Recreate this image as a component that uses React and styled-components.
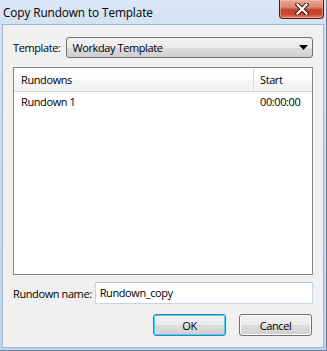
import React from "react";
import styled, { createGlobalStyle } from "styled-components";

const Global = createGlobalStyle`
  html, body { margin: 0; padding: 0; background: #fff; }
  body { font-family: "Open Sans", "Noto Sans", sans-serif; font-size: 11px; letter-spacing: -0.4px; color: #000; }
  * { box-sizing: border-box; }
`;

const Window = styled.div`
  width: 327px;
  height: 351px;
  display: flex;
  flex-direction: column;
  background: linear-gradient(#dce7f5 0px, #d3e1f2 24px, #bfd3ec 100%);
  border: 1px solid #6f819a;
  border-top: none;
  border-left: none;
  position: relative;
`;

const TitleBar = styled.div`
  height: 24px;
  flex: none;
  display: flex;
  align-items: flex-start;
  justify-content: space-between;
  padding-left: 3px;
`;

const Title = styled.div`
  font-size: 11.8px;
  letter-spacing: -0.1px;
  line-height: 18px;
  padding-top: 3px;
  color: #000;
`;

const CloseButton = styled.div`
  width: 45px;
  height: 19px;
  margin-right: 2px;
  border: 1px solid #4f1a12;
  border-top: none;
  border-radius: 0 0 4px 4px;
  background: linear-gradient(#e9a996 0%, #d98470 40%, #c5432a 55%, #c84a30 80%, #df8a6f 100%);
  box-shadow: inset 0 0 0 1px rgba(255, 200, 180, 0.45);
  display: flex;
  align-items: center;
  justify-content: center;
`;

const Client = styled.div`
  flex: 1;
  margin: 0 2px 2px 2px;
  background: #f0f0f0;
  border: 1px solid #a3b5cc;
  padding: 12px 10px 11px 10px;
  display: flex;
  flex-direction: column;
`;

const FieldRow = styled.div`
  display: flex;
  align-items: center;
  gap: ${(p) => p.$gap}px;
  height: ${(p) => p.$h}px;
  flex: none;
`;

const Label = styled.span`
  white-space: nowrap;
`;

const Combo = styled.div`
  flex: 1;
  height: 21px;
  border: 1px solid #707070;
  border-radius: 3px;
  background: linear-gradient(#f2f2f2 0%, #ebebeb 50%, #dddddd 51%, #cfcfcf 100%);
  display: flex;
  align-items: center;
  justify-content: space-between;
  padding: 0 4px 0 5px;
`;

const List = styled.div`
  margin-top: 9px;
  height: 208px;
  flex: none;
  border: 1px solid #828790;
  background: #fff;
  display: flex;
  flex-direction: column;
`;

const Grid = styled.div`
  display: grid;
  grid-template-columns: 240px 1fr;
`;

const HeaderCell = styled.div`
  height: 24px;
  display: flex;
  align-items: center;
  padding-left: ${(p) => p.$pl}px;
  background: linear-gradient(#ffffff 0%, #ffffff 45%, #f5f6f7 55%, #f1f2f4 100%);
  border-bottom: 1px solid #d5d5d5;
  border-right: ${(p) => (p.$divider ? "1px solid #dcdcdc" : "none")};
`;

const Cell = styled.div`
  height: 19px;
  display: flex;
  align-items: center;
  padding-left: ${(p) => p.$pl}px;
`;

const TextInput = styled.div`
  flex: 1;
  height: 22px;
  border: 1px solid #c5d5e6;
  border-top-color: #b4c3d4;
  background: #fff;
  display: flex;
  align-items: center;
  padding-left: 4px;
  padding-bottom: 2px;
`;

const ButtonRow = styled.div`
  margin-top: 10px;
  display: flex;
  justify-content: flex-end;
  gap: 13px;
  padding-right: 1px;
`;

const Button = styled.div`
  width: 73px;
  height: 22px;
  border: 1px solid ${(p) => (p.$default ? "#3c7fb1" : "#707070")};
  border-radius: 3px;
  background: linear-gradient(#f2f2f2 0%, #ebebeb 50%, #dddddd 51%, #cfcfcf 100%);
  box-shadow: ${(p) => (p.$default ? "inset 0 0 0 1px #48d2fb" : "inset 0 0 0 1px #fcfcfc")};
  display: flex;
  align-items: center;
  justify-content: center;
`;

const Spacer = styled.div`
  flex: 1;
`;

export default function App() {
  return (
    <>
      <Global />
      <Window>
        <TitleBar>
          <Title>Copy Rundown to Template</Title>
          <CloseButton>
            <svg width="14" height="12" viewBox="0 0 14 12">
              <path d="M2.5 1.5 L11.5 10.5 M11.5 1.5 L2.5 10.5" stroke="#3b1a14" strokeWidth="4.2" strokeLinecap="square" />
              <path d="M2.5 1.5 L11.5 10.5 M11.5 1.5 L2.5 10.5" stroke="#ffffff" strokeWidth="2.2" strokeLinecap="square" />
            </svg>
          </CloseButton>
        </TitleBar>
        <Client>
          <FieldRow $gap={6} $h={21}>
            <Label>Template:</Label>
            <Combo>
              <span>Workday Template</span>
              <svg width="9" height="5" viewBox="0 0 9 5">
                <path d="M0 0 H9 L4.5 5 Z" fill="#000" />
              </svg>
            </Combo>
          </FieldRow>
          <List>
            <Grid>
              <HeaderCell $pl={7} $divider>Rundowns</HeaderCell>
              <HeaderCell $pl={6}>Start</HeaderCell>
              <Cell $pl={7}>Rundown 1</Cell>
              <Cell $pl={6}>00:00:00</Cell>
            </Grid>
          </List>
          <Spacer />
          <FieldRow $gap={3} $h={22}>
            <Label>Rundown name:</Label>
            <TextInput>Rundown_copy</TextInput>
          </FieldRow>
          <ButtonRow>
            <Button $default>OK</Button>
            <Button>Cancel</Button>
          </ButtonRow>
        </Client>
      </Window>
    </>
  );
}
